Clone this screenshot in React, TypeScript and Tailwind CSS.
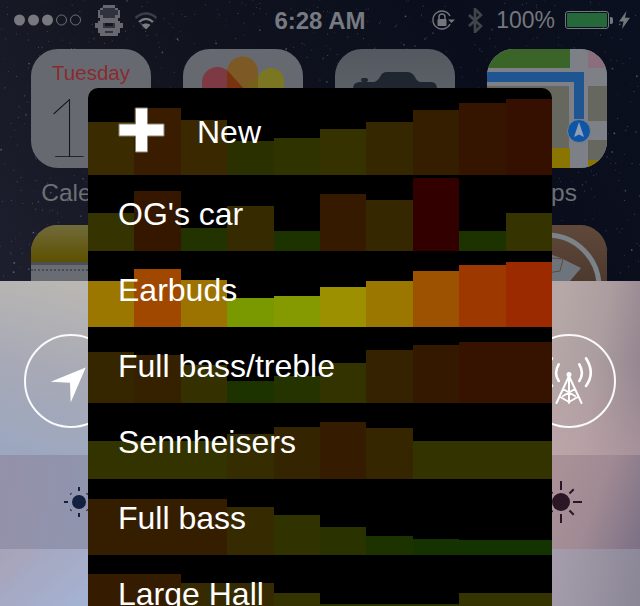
import React from "react";

type Bar = [number, string];
const rows: { label: string; plus?: boolean; bars: Bar[] }[] = [
  { label: "New", plus: true, bars: [[53,"#3a2b00"],[67,"#3a1c00"],[55,"#3a2900"],[34,"#2a3000"],[37,"#2e3300"],[46,"#353200"],[53,"#352800"],[65,"#351e00"],[72,"#351500"],[76,"#351000"]] },
  { label: "OG's car", bars: [[38,"#353300"],[60,"#351700"],[23,"#223300"],[45,"#352a00"],[20,"#1c3300"],[57,"#351a00"],[51,"#352800"],[73,"#330000"],[20,"#1c3300"],[38,"#353300"]] },
  { label: "Earbuds", bars: [[46,"#9c7700"],[58,"#a04800"],[47,"#9c7300"],[29,"#7a9900"],[31,"#859900"],[40,"#9c9000"],[46,"#9c7700"],[56,"#9c5200"],[62,"#9c3800"],[65,"#9c2a00"]] },
  { label: "Full bass/treble", bars: [[51,"#352600"],[48,"#352000"],[38,"#353000"],[22,"#1c3300"],[27,"#253300"],[40,"#333300"],[53,"#352200"],[58,"#351800"],[61,"#351300"],[61,"#351300"]] },
  { label: "Sennheisers", bars: [[38,"#333300"],[38,"#333300"],[38,"#333300"],[45,"#352c00"],[52,"#352400"],[57,"#351c00"],[51,"#352600"],[38,"#333300"],[38,"#333300"],[38,"#333300"]] },
  { label: "Full bass", bars: [[56,"#351d00"],[56,"#351d00"],[56,"#351d00"],[48,"#352a00"],[40,"#303300"],[28,"#2a3300"],[19,"#1c3300"],[16,"#153300"],[15,"#133300"],[15,"#133300"]] },
  { label: "Large Hall", bars: [[57,"#351c00"],[57,"#351c00"],[48,"#352a00"],[48,"#352a00"],[38,"#353300"],[27,"#2a3300"],[27,"#2a3300"],[27,"#2a3300"],[38,"#353300"],[38,"#353300"]] },
];

function Stars() {
  const stars: { x: number; y: number; o: number; r: number }[] = [];
  let seed = 12345;
  const rnd = () => {
    seed = (seed * 16807) % 2147483647;
    return seed / 2147483647;
  };
  for (let i = 0; i < 1100; i++) {
    stars.push({ x: rnd() * 640, y: rnd() * 281, o: 0.12 + rnd() * 0.35, r: rnd() > 0.85 ? 0.9 : 0.5 });
  }
  return (
    <svg className="absolute inset-0" width="640" height="281">
      {stars.map((s, i) => (
        <circle key={i} cx={s.x} cy={s.y} r={s.r} fill="#a8aee0" opacity={s.o} />
      ))}
    </svg>
  );
}

const pixels = [
  "...GGGGG...",
  "..GDDDDDG..",
  ".GDDDDDDDG.",
  ".GDDDDDDDG.",
  ".GGDDDDDGG.",
  "..GGGGGGG..",
  ".GGGGGGGGG.",
  "GGGD...DGGG",
  "GGGDDDDDGGG",
  ".GGGGGGGGG.",
  ".GGGDDDGGG.",
  "..GGGGGGG..",
];

function PixelGuy() {
  return (
    <svg width="28" height="31" viewBox="0 0 11 12" shapeRendering="crispEdges">
      {pixels.flatMap((row, y) =>
        row.split("").map((c, x) =>
          c === "." ? null : <rect key={`${x}-${y}`} x={x} y={y} width="1" height="1" fill={c === "G" ? "#66686d" : "#2f3340"} />
        )
      )}
    </svg>
  );
}

function StatusBar() {
  return (
    <div className="relative grid h-[40px] grid-cols-[1fr_auto_1fr] items-center">
      <div className="flex items-center pl-[14px]">
        <svg width="68" height="12" viewBox="0 0 68 12">
          <circle cx="5.5" cy="6" r="5.5" fill="#77797e" />
          <circle cx="19.5" cy="6" r="5.5" fill="#77797e" />
          <circle cx="33.5" cy="6" r="5.5" fill="#77797e" />
          <circle cx="47.5" cy="6" r="5" fill="none" stroke="#6d6f74" />
          <circle cx="61.5" cy="6" r="5" fill="none" stroke="#6d6f74" />
        </svg>
        <div className="ml-[13px] flex h-[31px] items-center">
          <PixelGuy />
        </div>
        <svg className="ml-[11px]" width="24" height="19" viewBox="0 0 24 19" fill="none">
          <path d="M1.5 7 C8 1 16 1 22.5 7" stroke="#3b3e46" strokeWidth="2.4" />
          <path d="M5 11 C9.5 7 14.5 7 19 11" stroke="#7a7c82" strokeWidth="2.2" />
          <path d="M12 18.5 L7.5 14 C10 12 14 12 16.5 14 Z" fill="#7a7c82" />
        </svg>
      </div>
      <div className="pt-[1px] text-[24px] font-bold leading-none text-[#777a80]" style={{ fontFamily: '"Liberation Sans", sans-serif' }}>
        6:28 AM
      </div>
      <div className="flex items-center justify-end pr-[10px]">
        <svg width="24" height="20" viewBox="0 0 24 20" fill="none">
          <path d="M19 6 A9 9 0 1 0 19 14" stroke="#74767b" strokeWidth="1.4" />
          <path d="M17 9.5 H24 L20.5 13 Z" fill="#74767b" />
          <rect x="6.5" y="9" width="9" height="7" rx="1" fill="#74767b" />
          <path d="M8 9 V7 a3 3 0 0 1 6 0 V9" stroke="#74767b" strokeWidth="1.4" />
        </svg>
        <svg className="ml-[12px]" width="17" height="25" viewBox="0 0 17 25" fill="none">
          <path d="M2 7 L14 18 L8 24 V1 L14 7 L2 18" stroke="#41444b" strokeWidth="2.6" />
        </svg>
        <span className="ml-[12px] pt-[1px] text-[23px] leading-none text-[#74777c]" style={{ fontFamily: '"Liberation Sans", sans-serif' }}>
          100%
        </span>
        <div className="ml-[10px] flex items-center">
          <div className="h-[18px] w-[44px] rounded-[3px] border border-[#74777c] p-[1px]">
            <div className="h-full w-full rounded-[1px] bg-[#25693a]" />
          </div>
          <div className="ml-[1px] h-[7px] w-[3px] rounded-r-[2px] bg-[#74777c]" />
        </div>
        <svg className="ml-[6px]" width="11" height="18" viewBox="0 0 11 18">
          <path d="M7.5 0 L0 10.5 H4.5 L3 18 L11 6.8 H6 Z" fill="#74777c" />
        </svg>
      </div>
    </div>
  );
}

function Icon({ label, children, className }: { label?: string; children?: React.ReactNode; className: string }) {
  return (
    <div className="flex flex-col items-center">
      <div className={`h-[119px] w-[120px] overflow-hidden rounded-[27px] ${className}`}>{children}</div>
      <div className="mt-[13px] h-[24px] whitespace-nowrap text-[24.5px] leading-[24px] text-[#6c6f74]" style={{ fontFamily: '"Liberation Sans", sans-serif' }}>
        {label}
      </div>
    </div>
  );
}

function CalendarFace() {
  return (
    <div className="flex flex-col items-center pt-[12px]">
      <div className="text-[20.5px] leading-[24px] text-[#8a2a30]" style={{ fontFamily: '"Liberation Sans", sans-serif' }}>
        Tuesday
      </div>
      <div className="text-[82px] font-thin leading-[80px] text-[#0c0e14]" style={{ fontFamily: 'Lato, Inter, sans-serif' }}>
        16
      </div>
    </div>
  );
}

function PhotosFace() {
  return (
    <svg width="120" height="119" viewBox="0 0 120 119">
      <rect x="19" y="18" width="31" height="50" rx="15.5" fill="#7e3a44" />
      <rect x="75" y="19" width="26" height="50" rx="13" fill="#7a7622" />
      <path d="M44 23 A15.5 15.5 0 0 1 75 23 V30 L60 46 L44 30 Z" fill="#7d5a25" />
      <path d="M44 21 L62 41 V60 H44 Z" fill="#7a3310" />
      <path d="M75 24 L60 41 V60 H75 Z" fill="#75601c" />
    </svg>
  );
}

function CameraFace() {
  return (
    <svg width="120" height="119" viewBox="0 0 120 119">
      <path d="M18 40 Q18 33 25 33 H38 Q42 33 45 28 Q47 23 52 23 H72 Q77 23 80 28 Q82 33 86 33 H96 Q102 33 102 40 V119 H18 Z" fill="#1f2630" />
      <rect x="26" y="29" width="7" height="4" rx="2" fill="#1f2630" />
    </svg>
  );
}

function MapsFace() {
  return (
    <svg width="120" height="119" viewBox="0 0 120 119">
      <rect width="120" height="119" fill="#7d8087" />
      <rect width="83" height="19" fill="#3a6428" />
      <rect x="101" width="19" height="19" fill="#8b6e7c" />
      <rect y="37" x="0" width="82" height="70" fill="#66675f" />
      <rect x="101" y="37" width="19" height="35" fill="#66675f" />
      <rect x="101" y="91" width="19" height="20" fill="#66675f" />
      <path d="M66 99 H83 V119 H40 Q58 112 66 99 Z" fill="#8a7500" />
      <rect x="101" y="111" width="19" height="8" fill="#8a7500" />
      <path d="M0 23 H97 V70 H87 V33 H0 Z" fill="#1f5590" />
      <circle cx="92" cy="82" r="11.5" fill="#0f55a5" stroke="#7d8087" strokeWidth="1" />
      <path d="M92 73 L97 88 L92 85.5 L87 88 Z" fill="#8f9fb5" />
    </svg>
  );
}

function NotesFace() {
  return (
    <div className="h-full w-full bg-[#696c72]">
      <div className="h-[37px] bg-[linear-gradient(180deg,#706b3a,#5e5000)]" />
      <div className="h-[3px] bg-[#4d4f57]" />
      <div className="mt-[4px] h-[2px] border-t-2 border-dotted border-[#4a4c53]" />
    </div>
  );
}

function CydiaFace() {
  return (
    <svg width="120" height="119" viewBox="0 0 120 119">
      <defs>
        <linearGradient id="cy" x1="0" x2="0" y1="0" y2="1">
          <stop offset="0" stopColor="#60493a" />
          <stop offset="0.55" stopColor="#4a362c" />
        </linearGradient>
      </defs>
      <rect width="120" height="119" fill="url(#cy)" />
      <circle cx="60" cy="62" r="52" fill="none" stroke="#7b8288" strokeWidth="5" />
      <path d="M60 28 L76 34 L94 43 L78 62 L60 62 Z" fill="#6d747b" />
      <path d="M65 33 L76 34 M76 34 L73 46 L60 48" stroke="#5f4a3b" strokeWidth="1" fill="none" />
    </svg>
  );
}

function Circle({ children }: { children: React.ReactNode }) {
  return <div className="h-[94px] w-[94px] rounded-full border-2 border-white/95">{children}</div>;
}

function CtrlPanels({ left, right, a, b }: { left?: React.ReactNode; right?: React.ReactNode; a: string; b: string }) {
  return (
    <>
      <div className={`flex w-[142px] ${a}`}>{left}</div>
      <div className={`flex w-[142px] ${b}`}>{right}</div>
    </>
  );
}

function Sun({ core, inner, outer, color }: { core: number; inner: number; outer: number; color: string }) {
  const s = outer + 1;
  const rays = [0, 45, 90, 135, 180, 225, 270, 315];
  return (
    <svg width={s * 2} height={s * 2} viewBox={`${-s} ${-s} ${s * 2} ${s * 2}`}>
      <circle r={core} fill={color} />
      {rays.map((d) => (
        <line key={d} x1={0} y1={-inner} x2={0} y2={-(d % 90 === 0 ? outer : outer - 3)} stroke={color} strokeWidth="2" transform={`rotate(${d})`} />
      ))}
    </svg>
  );
}

function ControlCenter() {
  return (
    <div className="flex flex-1 flex-col">
      <div className="flex h-[174px] justify-between">
        <CtrlPanels
          a="items-start justify-center pt-[53px] bg-[linear-gradient(195deg,#bebab2_0%,#a7a9b6_55%,#9ba7c0_100%)]"
          b="items-start justify-center pt-[53px] bg-[linear-gradient(180deg,transparent_45%,rgba(200,168,174,0.45)_100%),linear-gradient(100deg,#b5a8a6_38%,#ac9da0_65%,#8c7e89_100%)]"
          left={
            <Circle>
              <svg width="90" height="90" viewBox="0 0 90 90">
                <path d="M24.7 45.7 L59.7 31.4 L44.7 66.4 L44 46.7 Z" fill="#fff" />
              </svg>
            </Circle>
          }
          right={
            <Circle>
              <svg width="90" height="90" viewBox="0 0 90 90" fill="none" stroke="#fff" strokeLinecap="round">
                <g strokeWidth="2.6">
                  <path d="M55.3 28.3 Q60.5 37 55.3 45" />
                  <path d="M62 22.3 Q71.5 37 62 50" />
                  <path d="M34.7 28.3 Q29.5 37 34.7 45" />
                  <path d="M28 22.3 Q18.5 37 28 50" />
                </g>
                <circle cx="45" cy="38.5" r="2.5" fill="#fff" stroke="none" />
                <path d="M45 40 V67 M45 40 L32.5 67 M45 40 L57.5 67 M39 53 L51 60 M51 53 L39 60 M35.5 60.5 L45 66 M54.5 60.5 L45 66" strokeWidth="2" />
              </svg>
            </Circle>
          }
        />
      </div>
      <div className="flex h-[94px] justify-between">
        <CtrlPanels
          a="items-center pl-[63px] bg-[linear-gradient(100deg,#9491a9,#8d96b0)]"
          b="items-center justify-end pr-[57px] bg-[linear-gradient(110deg,#aa9198_38%,#a08a93_65%,#7b7085_100%)]"
          left={<Sun core={7} inner={11} outer={15} color="#14203f" />}
          right={<Sun core={9} inner={12} outer={21} color="#2a1626" />}
        />
      </div>
      <div className="flex flex-1 justify-between">
        <CtrlPanels
          a="bg-[linear-gradient(140deg,#a7a3b8_0%,#a4b2d2_70%)]"
          b="bg-[linear-gradient(100deg,#a59dab_38%,#8a8696_100%)]"
        />
      </div>
    </div>
  );
}

function Popup() {
  return (
    <div className="absolute bottom-0 left-[88px] top-[88px] w-[464px] overflow-hidden rounded-t-[10px] bg-black pt-[11px] text-white" style={{ fontFamily: '"Liberation Sans", sans-serif' }}>
      {rows.map((r) => (
        <div key={r.label} className="relative flex h-[76px] shrink-0 items-end">
          {r.bars.map(([h, c], i) => (
            <div key={i} className="flex-1" style={{ height: h, backgroundColor: c }} />
          ))}
          <div className={`absolute inset-x-0 bottom-0 flex items-end whitespace-nowrap text-[32px] leading-[32px] ${r.plus ? "pb-[27px] pl-[109px]" : "pb-[21px] pl-[30px]"}`}>
            {r.label}
          </div>
          {r.plus && (
            <svg className="absolute bottom-[22px] left-[30px]" width="47" height="46" viewBox="0 0 47 46">
              <path d="M17.5 1 H29.5 V17 H46 V29 H29.5 V45 H17.5 V29 H1 V17 H17.5 Z" fill="#fff" stroke="#8a8478" strokeWidth="1" />
            </svg>
          )}
        </div>
      ))}
    </div>
  );
}

export default function App() {
  return (
    <div className="relative flex h-[606px] w-[640px] flex-col overflow-hidden bg-black">
      <div className="relative h-[281px] shrink-0 overflow-hidden bg-[linear-gradient(60deg,#1d1f2e_0%,#12141f_35%,#0a0e1c_75%,#0b1020_100%)]">
        <Stars />
        <StatusBar />
        <div className="relative grid grid-cols-[repeat(4,120px)] gap-x-[32px] gap-y-[20px] px-[31px] pt-[9px]">
          <Icon label="Calendar" className="bg-[#666a70]"><CalendarFace /></Icon>
          <Icon className="bg-[#666a70]"><PhotosFace /></Icon>
          <Icon className="bg-[linear-gradient(180deg,#54585f,#6a6e75)]"><CameraFace /></Icon>
          <Icon label="Maps" className="bg-[#7d8087]"><MapsFace /></Icon>
          <Icon className="bg-[#666a70]"><NotesFace /></Icon>
          <Icon className="bg-[#666a70]" />
          <Icon className="bg-[#666a70]" />
          <Icon className="bg-[#4a362c]"><CydiaFace /></Icon>
        </div>
      </div>
      <ControlCenter />
      <Popup />
    </div>
  );
}
